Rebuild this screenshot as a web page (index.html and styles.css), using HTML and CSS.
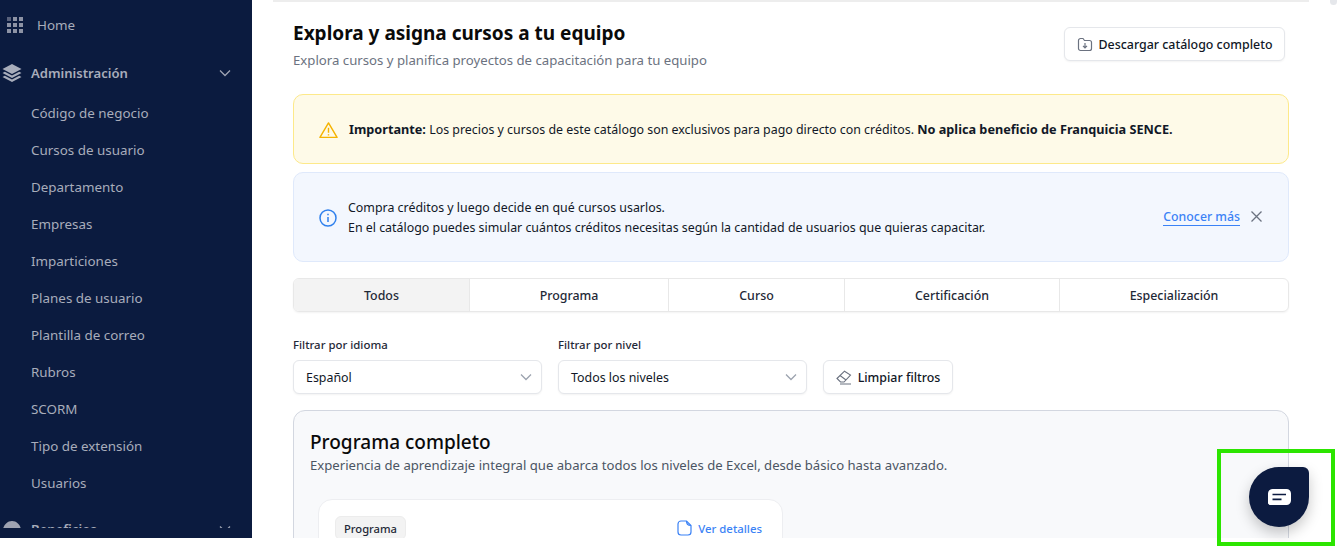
FILE: index.html
```html
<!DOCTYPE html>
<html lang="es">
<head>
<meta charset="utf-8">
<title>Explora y asigna cursos</title>
<link rel="stylesheet" href="styles.css">
</head>
<body>
<div class="app">
  <aside class="sidebar">
    <div class="side-scroll">
    <a class="home">
      <svg class="home-icon" width="16" height="16" viewBox="0 0 16 16"><g fill="#8d93a5"><rect x="0" y="0" width="4" height="4" opacity=".6"/><rect x="6" y="0" width="4" height="4"/><rect x="12" y="0" width="4" height="4"/><rect x="0" y="6" width="4" height="4"/><rect x="6" y="6" width="4" height="4"/><rect x="12" y="6" width="4" height="4"/><rect x="0" y="12" width="4" height="4"/><rect x="6" y="12" width="4" height="4"/><rect x="12" y="12" width="4" height="4"/></g></svg>
      <span>Home</span>
    </a>
    <div class="group-head">
      <svg class="layers" width="20" height="19" viewBox="0 0 20 19"><path d="M10 0 19.500 5 10 10 .5 5Z" fill="#a8adbb"/><path d="M2.800 7.800 10 11.600 17.200 7.800 19.500 9 10 14 .5 9Z" fill="#a8adbb"/><path d="M2.800 11.800 10 15.600 17.200 11.800 19.500 13 10 18 .5 13Z" fill="#a8adbb"/></svg>
      <span>Administración</span>
      <svg class="caret" width="12" height="8" viewBox="0 0 12 8"><path d="M1 1.500 6 6.500 11 1.500" fill="none" stroke="#9ea3b2" stroke-width="1.300"/></svg>
    </div>
    <nav class="sub">
      <a>Código de negocio</a>
      <a>Cursos de usuario</a>
      <a>Departamento</a>
      <a>Empresas</a>
      <a>Imparticiones</a>
      <a>Planes de usuario</a>
      <a>Plantilla de correo</a>
      <a>Rubros</a>
      <a>SCORM</a>
      <a>Tipo de extensión</a>
      <a>Usuarios</a>
    </nav>
    <div class="group-head second">
      <svg class="layers" width="20" height="19" viewBox="0 0 20 19"><path d="M10 1C5 1 2 5 1 9h18C18 5 15 1 10 1Z" fill="#9ea3b2"/></svg>
      <span>Beneficios</span>
      <svg class="caret" width="12" height="8" viewBox="0 0 12 8"><path d="M1 1.500 6 6.500 11 1.500" fill="none" stroke="#9ea3b2" stroke-width="1.300"/></svg>
    </div>
    </div>
  </aside>

  <main class="main">
    <header class="page-head">
      <div>
        <h1>Explora y asigna cursos a tu equipo</h1>
        <p>Explora cursos y planifica proyectos de capacitación para tu equipo</p>
      </div>
      <button class="btn download">
        <svg width="16" height="16" viewBox="0 0 16 16" fill="none" stroke="#6b7280" stroke-width="1.200"><path d="M1.500 4.500a2 2 0 0 1 2-2H6l1.500 2h5a2 2 0 0 1 2 2v6a2 2 0 0 1-2 2h-9a2 2 0 0 1-2-2Z"/><path d="M8 7v4.500M6 9.800l2 2 2-2"/></svg>
        Descargar catálogo completo
      </button>
    </header>

    <section class="alert warn">
      <svg width="19" height="18" viewBox="0 0 20 18" fill="none" stroke="#f5b301" stroke-width="1.500" stroke-linejoin="round"><path d="M10 1.500 19 16.800H1Z"/><path d="M10 6.500v5.500M10 13.500v1.300"/></svg>
      <p><b>Importante:</b> Los precios y cursos de este catálogo son exclusivos para pago directo con créditos. <b>No aplica beneficio de Franquicia SENCE.</b></p>
    </section>

    <section class="alert info">
      <svg width="18" height="18" viewBox="0 0 18 18" fill="none" stroke="#2f80ed" stroke-width="1.500"><circle cx="9" cy="9" r="8"/><path d="M9 8v5M9 4.800v1.500"/></svg>
      <p>Compra créditos y luego decide en qué cursos usarlos.<br>En el catálogo puedes simular cuántos créditos necesitas según la cantidad de usuarios que quieras capacitar.</p>
      <a class="more">Conocer más</a>
      <svg class="close" width="11" height="11" viewBox="0 0 11 11" stroke="#6b7280" stroke-width="1.300"><path d="M.5.500l10 10M10.500.500l-10 10"/></svg>
    </section>

    <div class="tabs">
      <div class="tab active">Todos</div>
      <div class="tab">Programa</div>
      <div class="tab">Curso</div>
      <div class="tab">Certificación</div>
      <div class="tab">Especialización</div>
    </div>

    <div class="filters">
      <div class="field">
        <label>Filtrar por idioma</label>
        <div class="select">Español<svg width="12" height="8" viewBox="0 0 12 8"><path d="M1 1.500 6 6.500 11 1.500" fill="none" stroke="#9ca3af" stroke-width="1.300"/></svg></div>
      </div>
      <div class="field">
        <label>Filtrar por nivel</label>
        <div class="select">Todos los niveles<svg width="12" height="8" viewBox="0 0 12 8"><path d="M1 1.500 6 6.500 11 1.500" fill="none" stroke="#9ca3af" stroke-width="1.300"/></svg></div>
      </div>
      <button class="btn clear">
        <svg width="16" height="15" viewBox="0 0 16 15" fill="none" stroke="#6b7280" stroke-width="1.100"><path d="M1 8.500 8.500 1.200 14.500 5 8 12H4.500Z"/><path d="M4 5.500 10 10M4 14h11"/></svg>
        Limpiar filtros
      </button>
    </div>

    <section class="panel">
      <h2>Programa completo</h2>
      <p>Experiencia de aprendizaje integral que abarca todos los niveles de Excel, desde básico hasta avanzado.</p>
      <article class="card">
        <span class="tag">Programa</span>
        <a class="details">
          <svg width="15" height="16" viewBox="0 0 15 16" fill="none" stroke="#3b82f6" stroke-width="1.200"><path d="M9.500 1H4a3 3 0 0 0-3 3v8a3 3 0 0 0 3 3h7a3 3 0 0 0 3-3V5.500Z"/><path d="M9.500 1c0 3 1 4.500 4.500 4.500"/></svg>
          Ver detalles
        </a>
      </article>
    </section>
  </main>

  <div class="scroll-thumb"></div>
  <button class="chat">
    <svg width="23" height="16" viewBox="0 0 23 16"><path d="M4.500 0h14a4.500 4.500 0 0 1 4.500 4.500v7a4.500 4.500 0 0 1-4.500 4.500H1.500L0 14.500v-10A4.500 4.500 0 0 1 4.500 0Z" fill="#fff"/><path d="M4.500 5.500h13.500M4.500 10.300h9" stroke="#0c1b40" stroke-width="1.700"/></svg>
  </button>
  <div class="highlight"></div>
</div>
</body>
</html>
```
FILE: styles.css
```css
* { box-sizing: border-box; }
html, body { margin: 0; background: #fff; }
body { font-family: "Noto Sans", "Open Sans", sans-serif; color: #111827; height: 548px; }
p, h1, h2 { margin: 0; }
a { text-decoration: none; }

.app { position: relative; display: flex; height: 538px; width: 1338px; }

.sidebar { width: 252px; height: 538px; flex: none; background: #0b1b3f; color: #a8adbb; font-size: 13.4px; padding-bottom: 10px; }
.side-scroll { height: 100%; overflow: hidden; padding-top: 16px; }
.home { display: flex; align-items: center; height: 18px; padding-left: 7px; gap: 14px; }
.group-head { display: flex; align-items: center; height: 20px; margin-top: 29px; padding: 0 21px 0 2px; font-size: 13.1px; font-weight: 600; gap: 9px; }
.group-head span { flex: 1; }
.group-head.second { margin-top: 18px; }
.layers { flex: none; }
.sub { display: flex; flex-direction: column; margin-top: 11px; }
.sub a { display: flex; align-items: center; height: 37px; padding-left: 31px; }

.main { width: 1036px; margin-left: 21px; flex: none; border-top: 2px solid #ededed; padding: 0 20px; height: 538px; overflow: hidden; }

.page-head { display: flex; justify-content: space-between; height: 92px; padding-right: 4px; }
.page-head h1 { font-size: 19px; font-weight: 700; line-height: 26px; margin-top: 18px; color: #0a0a0a; }
.page-head p { font-size: 13.2px; line-height: 18px; margin-top: 5px; color: #6b7280; }

.btn { display: inline-flex; align-items: center; height: 34px; background: #fff; border: 1px solid #e5e7eb; border-radius: 6px; font: 500 12.4px "Noto Sans", sans-serif; color: #111827; gap: 6px; box-shadow: 0 1px 2px rgba(0, 0, 0, .05); padding: 0; }
.download { width: 221px; margin-top: 25px; justify-content: center; }

.alert { display: flex; align-items: center; border-radius: 10px; font-size: 12.4px; line-height: 20px; padding: 1px 26px 0 25px; color: #111827; }
.alert b { font-size: 12.7px; }
.warn { height: 70px; background: #fefae8; border: 1px solid #fde98a; gap: 11px; }
.info { height: 90px; margin-top: 8px; background: #f3f7fe; border: 1px solid #dfe9fb; gap: 11px; }
.info p { flex: 1; }
.more { color: #3b82f6; font-size: 12.3px; font-weight: 500; border-bottom: 1px solid #3b82f6; line-height: 17px; margin-bottom: 2px; }
.close { margin-bottom: 2px; }

.tabs { display: grid; grid-template-columns: 175px 199px 176px 215px 229px; height: 34px; margin-top: 16px; border: 1px solid #e8e8e8; border-radius: 6px; overflow: hidden; box-shadow: 0 1px 2px rgba(0, 0, 0, .05); }
.tab { display: flex; align-items: center; justify-content: center; font-size: 12.4px; font-weight: 500; color: #1f2937; border-left: 1px solid #e8e8e8; }
.tab:first-child { border-left: 0; }
.tab.active { background: #f3f3f3; }

.filters { display: flex; align-items: flex-end; gap: 16px; margin-top: 25px; }
.field { width: 249px; }
.field label { display: block; font-size: 11.4px; font-weight: 500; line-height: 16px; margin-bottom: 7px; color: #1f2937; }
.select { display: flex; align-items: center; justify-content: space-between; height: 34px; border: 1px solid #e5e7eb; border-radius: 6px; padding: 0 9px 0 12px; font-size: 12.4px; background: #fff; box-shadow: 0 1px 2px rgba(0, 0, 0, .05); }
.clear { width: 130px; justify-content: center; }

.panel { margin-top: 16px; height: 200px; background: #f8f9fb; border: 1px solid #d3d7e0; border-radius: 12px; padding: 18px 16px 0; }
.panel h2 { font-size: 19px; font-weight: 500; line-height: 26px; color: #0a0a0a; }
.panel > p { font-size: 13.13px; line-height: 20px; color: #4b5563; }
.card { display: flex; justify-content: space-between; align-items: flex-start; width: 465px; height: 100px; margin: 24px 0 0 8px; padding: 16px 20px 0 16px; background: #fff; border: 1px solid #edeef1; border-radius: 14px; }
.tag { display: inline-flex; align-items: center; height: 24px; padding: 0 8px; background: #f3f3f3; border: 1px solid #ececec; border-radius: 6px; font-size: 11.2px; font-weight: 500; color: #1f2937; }
.details { display: inline-flex; align-items: center; height: 24px; gap: 6px; color: #3b82f6; font-size: 11.4px; font-weight: 500; }

.scroll-thumb { position: absolute; right: 1px; top: 0; width: 7px; height: 5px; background: #e5e7eb; border-radius: 0 0 4px 4px; }
.chat { position: absolute; left: 1249px; top: 467px; display: flex; align-items: center; justify-content: center; width: 60px; height: 60px; border: 0; padding: 0; background: #0c1b40; border-radius: 50% 6px 50% 50%; box-shadow: 0 6px 14px rgba(0, 0, 0, .22); }
.highlight { position: absolute; left: 1217px; top: 449px; width: 118px; height: 97px; border: 4px solid #2ce500; }
```
